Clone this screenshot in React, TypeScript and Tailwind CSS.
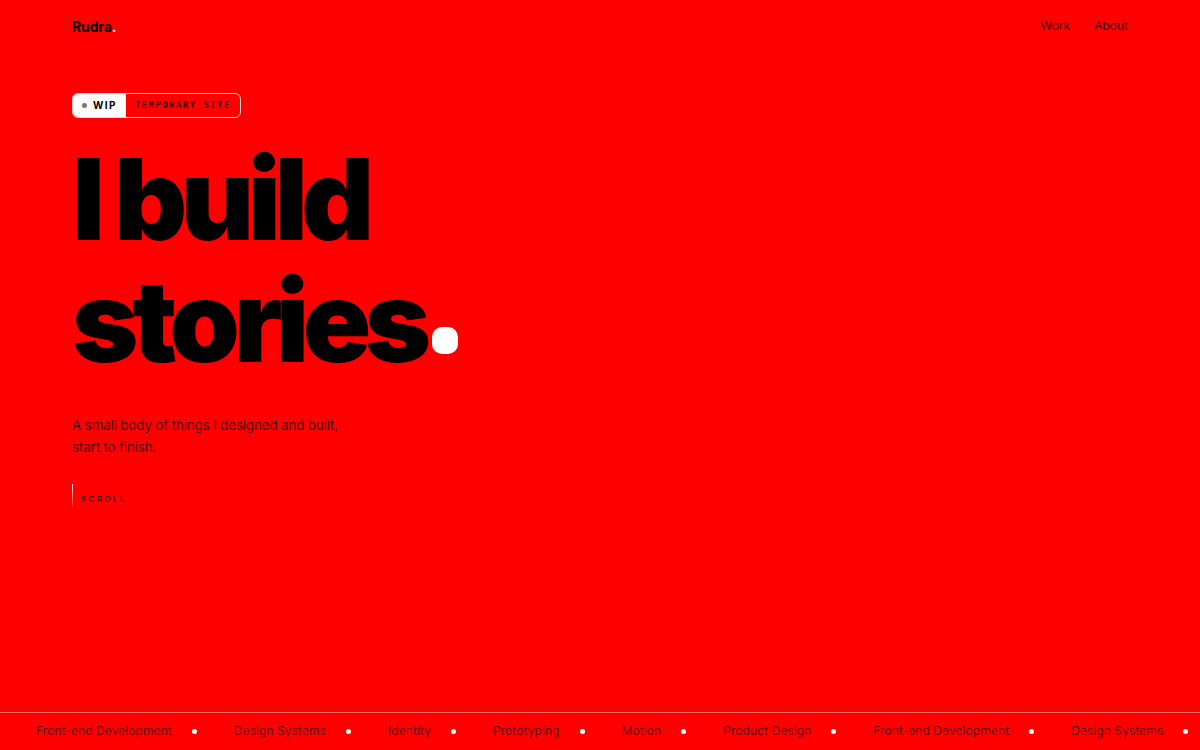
import React from "react";

const items = [
  "Front-end Development",
  "Design Systems",
  "Identity",
  "Prototyping",
  "Motion",
  "Product Design",
  "Front-end Development",
  "Design Systems",
];

export default function App() {
  return (
    <div
      className="w-full h-[750px] bg-[#ff0000] flex flex-col overflow-hidden text-black"
      style={{ fontFamily: "Inter, 'Noto Sans', sans-serif" }}
    >
      <header className="h-[52px] px-[72px] flex items-center justify-between shrink-0">
        <div className="text-[14px] font-bold tracking-[-0.01em]">
          Rudra<span className="text-white">.</span>
        </div>
        <nav className="flex items-center gap-[24px] text-[12px] text-black/80">
          <span>Work</span>
          <span>About</span>
        </nav>
      </header>

      <main className="flex-1 px-[72px] pt-[41px]">
        <div className="flex w-max h-[25px] rounded-[6px] border border-white/80 overflow-hidden">
          <div className="bg-white flex items-center gap-[6px] pl-[9px] pr-[9px] text-[10px] font-bold tracking-[0.14em] text-black">
            <span className="w-[5px] h-[5px] rounded-full bg-[#777]"></span>
            WIP
          </div>
          <div
            className="flex items-center px-[9px] text-[9px] font-bold tracking-[0.16em] text-black/80"
            style={{ fontFamily: "'DejaVu Sans Mono', 'Liberation Mono', monospace" }}
          >
            TEMPORARY SITE
          </div>
        </div>

        <h1 className="mt-[20px] text-[113px] leading-[122px] font-black tracking-[-0.058em] text-black">
          I build
          <br />
          stories
          <span className="inline-block ml-[7px] w-[26px] h-[27px] rounded-[10px] bg-white align-[8px] text-[12px] leading-[27px] text-center text-white tracking-normal overflow-hidden">
            .
          </span>
        </h1>

        <p className="mt-[32px] text-[13.5px] leading-[22px] tracking-[-0.015em] text-black/75">
          A small body of things I designed and built,
          <br />
          start to finish.
        </p>

        <div className="mt-[26px] flex items-center h-[23px]">
          <div className="w-px h-full bg-gradient-to-b from-white/90 to-white/10"></div>
          <span className="ml-[8px] mt-[6px] text-[8px] font-semibold tracking-[0.3em] text-black/80">
            SCROLL
          </span>
        </div>
      </main>

      <div className="h-[38px] shrink-0 border-t border-white/40 flex items-center pl-[36px] whitespace-nowrap overflow-hidden">
        {items.map((t, i) => (
          <div key={i} className="flex items-center shrink-0">
            <span className="text-[12.15px] text-black/65">{t}</span>
            <span className="ml-[20px] mr-[37px] w-[5px] h-[5px] rounded-full bg-white"></span>
          </div>
        ))}
      </div>
    </div>
  );
}
